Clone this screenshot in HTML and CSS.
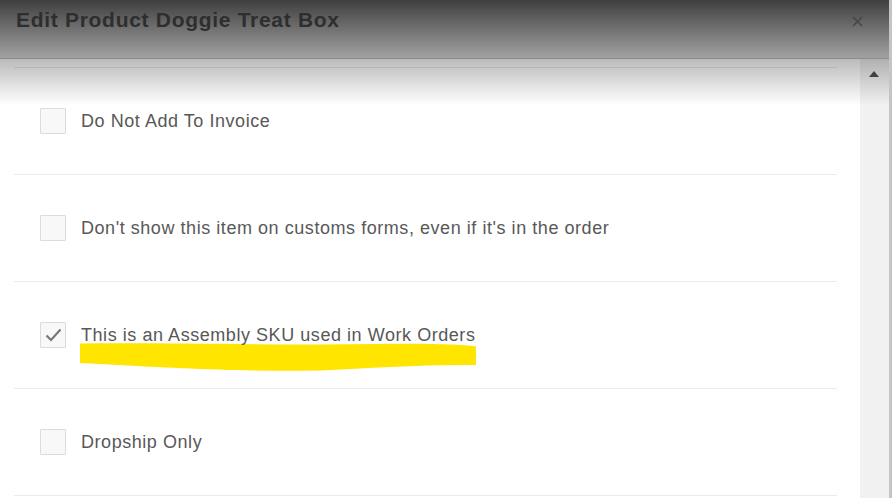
FILE: index.html
```html
<!DOCTYPE html>
<html lang="en">
<head>
    <meta charset="UTF-8">
    <meta name="viewport" content="width=device-width, initial-scale=1.0">
    <title>Edit Product</title>
    <link rel="stylesheet" href="styles.css">
</head>
<body>
    <div class="modal">
        <div class="modal-header">
            <h4 class="modal-title">Edit Product Doggie Treat Box</h4>
            <svg class="close" width="11" height="11" viewBox="0 0 11 11">
                <path d="M1 1 L10 10 M10 1 L1 10" stroke="#474747" stroke-width="1.7" fill="none"/>
            </svg>
        </div>
        <div class="modal-body">
            <div class="content">
                <div class="row-top"></div>
                <div class="check-row">
                    <span class="checkbox"></span>
                    <span class="label">Do Not Add To Invoice</span>
                </div>
                <div class="check-row">
                    <span class="checkbox"></span>
                    <span class="label">Don't show this item on customs forms, even if it's in the order</span>
                </div>
                <div class="check-row">
                    <span class="checkbox checked">
                        <svg width="17" height="14" viewBox="0 0 17 14">
                            <path d="M1.5 7.5 L6 12 L15.5 1.5" stroke="#777" stroke-width="2.2" fill="none"/>
                        </svg>
                    </span>
                    <span class="label">This is an Assembly SKU used in Work Orders</span>
                    <!-- yellow marker scribble -->
                    <svg class="marker" width="397" height="30" viewBox="0 0 397 30">
                        <path d="M0 0.5 C 90 -0.5 200 2.5 300 1 C 350 0.5 380 1.5 396 3.5 L 396 22 C 340 21.5 290 25 240 27.5 C 170 29 90 25 40 22 C 20 21 8 20.5 0 20 Z" fill="#ffe500"/>
                    </svg>
                </div>
                <div class="check-row">
                    <span class="checkbox"></span>
                    <span class="label">Dropship Only</span>
                </div>
            </div>
            <div class="scrollbar">
                <span class="arrow-up"></span>
            </div>
            <div class="shade"></div>
        </div>
    </div>
</body>
</html>
```

FILE: styles.css
```css
body {
    margin: 0;
    width: 892px;
    height: 498px;
    overflow: hidden;
    background: #fff;
    font-family: "Liberation Sans", Arial, sans-serif;
}
.modal {
    display: flex;
    flex-direction: column;
    height: 498px;
    border-right: 3px solid #c4c4c4;
}
.modal-header {
    height: 59px;
    display: flex;
    justify-content: space-between;
    align-items: flex-start;
    padding: 8px 26px 0 16px;
    box-sizing: border-box;
    background: linear-gradient(#3f3f3f 0%, #6c6c6c 45%, #a1a1a1 100%);
    border-bottom: 1px solid #8c8c8c;
}
.modal-title {
    margin: 0;
    font-size: 21px;
    line-height: 24px;
    letter-spacing: 0.7px;
    font-weight: bold;
    color: #2e2e2e;
}
.close {
    margin-top: 8px;
}
.modal-body {
    flex: 1;
    display: flex;
    position: relative;
    overflow: hidden;
}
.content {
    flex: 1;
    padding: 0 23px 0 14px;
}
.row-top {
    height: 8px;
    border-bottom: 1px solid #ebebeb;
}
.check-row {
    position: relative;
    height: 107px;
    box-sizing: border-box;
    border-bottom: 1px solid #ebebeb;
    display: flex;
    align-items: center;
    padding-left: 26px;
    gap: 15px;
}
.checkbox {
    width: 24px;
    height: 24px;
    border: 1px solid #dcdcdc;
    background: #f8f8f8;
    border-radius: 1px;
    display: flex;
    align-items: center;
    justify-content: center;
    flex-shrink: 0;
}
.label {
    position: relative;
    z-index: 1;
    font-size: 18px;
    line-height: 22px;
    letter-spacing: 0.55px;
    color: #585858;
}
.marker {
    position: absolute;
    left: 66px;
    top: 61px;
}
.scrollbar {
    width: 29px;
    background: #f1f1f1;
    display: flex;
    justify-content: center;
    padding-top: 12px;
    box-sizing: border-box;
}
.arrow-up {
    width: 0;
    height: 0;
    border-left: 5px solid transparent;
    border-right: 5px solid transparent;
    border-bottom: 6px solid #505050;
    margin-right: 2px;
}
.shade {
    position: absolute;
    top: 0;
    left: 0;
    right: 0;
    height: 46px;
    background: linear-gradient(rgba(0, 0, 0, 0.27), rgba(0, 0, 0, 0));
    pointer-events: none;
}
```
